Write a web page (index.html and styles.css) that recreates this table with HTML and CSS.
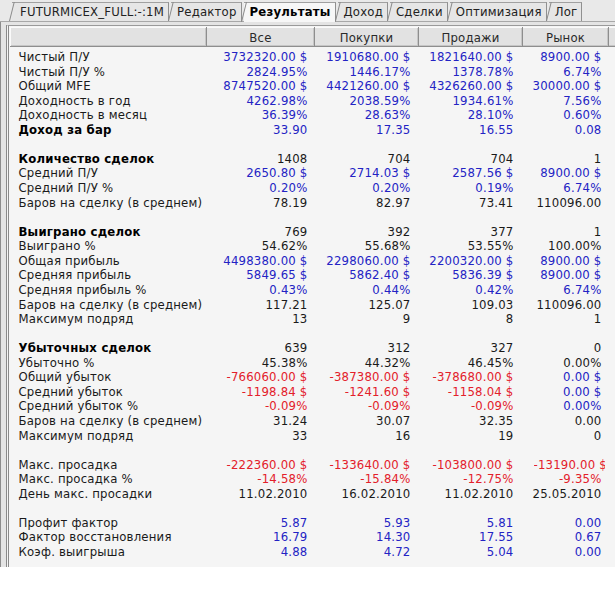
FILE: index.html
```html
<!DOCTYPE html>
<html lang="ru">
<head>
<meta charset="utf-8">
<link rel="stylesheet" href="styles.css">
</head>
<body>
<div class="app">
  <div class="tabs">
    <div class="tab">FUTURMICEX_FULL:-:1M</div>
    <div class="tab">Редактор</div>
    <div class="tab active">Результаты</div>
    <div class="tab">Доход</div>
    <div class="tab">Сделки</div>
    <div class="tab">Оптимизация</div>
    <div class="tab">Лог</div>
  </div>
  <div class="frame">
    <div class="panel">
      <table class="grid">
        <colgroup>
          <col class="c-label"><col class="c1"><col class="c2"><col class="c3"><col class="c4"><col class="c5">
        </colgroup>
        <thead>
          <tr><th></th><th>Все</th><th>Покупки</th><th>Продажи</th><th>Рынок</th><th></th></tr>
        </thead>
        <tbody>
          <tr class="first"><td>Чистый П/У</td><td class="b">3732320.00 $</td><td class="b">1910680.00 $</td><td class="b">1821640.00 $</td><td class="b">8900.00 $</td><td></td></tr>
          <tr><td>Чистый П/У %</td><td class="b">2824.95%</td><td class="b">1446.17%</td><td class="b">1378.78%</td><td class="b">6.74%</td><td></td></tr>
          <tr><td>Общий MFE</td><td class="b">8747520.00 $</td><td class="b">4421260.00 $</td><td class="b">4326260.00 $</td><td class="b">30000.00 $</td><td></td></tr>
          <tr><td>Доходность в год</td><td class="b">4262.98%</td><td class="b">2038.59%</td><td class="b">1934.61%</td><td class="b">7.56%</td><td></td></tr>
          <tr><td>Доходность в месяц</td><td class="b">36.39%</td><td class="b">28.63%</td><td class="b">28.10%</td><td class="b">0.60%</td><td></td></tr>
          <tr><td class="bold">Доход за бар</td><td class="b">33.90</td><td class="b">17.35</td><td class="b">16.55</td><td class="b">0.08</td><td></td></tr>
          <tr class="gap"><td colspan="6"></td></tr>
          <tr><td class="bold">Количество сделок</td><td>1408</td><td>704</td><td>704</td><td>1</td><td></td></tr>
          <tr><td>Средний П/У</td><td class="b">2650.80 $</td><td class="b">2714.03 $</td><td class="b">2587.56 $</td><td class="b">8900.00 $</td><td></td></tr>
          <tr><td>Средний П/У %</td><td class="b">0.20%</td><td class="b">0.20%</td><td class="b">0.19%</td><td class="b">6.74%</td><td></td></tr>
          <tr><td>Баров на сделку (в среднем)</td><td>78.19</td><td>82.97</td><td>73.41</td><td>110096.00</td><td></td></tr>
          <tr class="gap"><td colspan="6"></td></tr>
          <tr><td class="bold">Выиграно сделок</td><td>769</td><td>392</td><td>377</td><td>1</td><td></td></tr>
          <tr><td>Выиграно %</td><td>54.62%</td><td>55.68%</td><td>53.55%</td><td>100.00%</td><td></td></tr>
          <tr><td>Общая прибыль</td><td class="b">4498380.00 $</td><td class="b">2298060.00 $</td><td class="b">2200320.00 $</td><td class="b">8900.00 $</td><td></td></tr>
          <tr><td>Средняя прибыль</td><td class="b">5849.65 $</td><td class="b">5862.40 $</td><td class="b">5836.39 $</td><td class="b">8900.00 $</td><td></td></tr>
          <tr><td>Средняя прибыль %</td><td class="b">0.43%</td><td class="b">0.44%</td><td class="b">0.42%</td><td class="b">6.74%</td><td></td></tr>
          <tr><td>Баров на сделку (в среднем)</td><td>117.21</td><td>125.07</td><td>109.03</td><td>110096.00</td><td></td></tr>
          <tr><td>Максимум подряд</td><td>13</td><td>9</td><td>8</td><td>1</td><td></td></tr>
          <tr class="gap"><td colspan="6"></td></tr>
          <tr><td class="bold">Убыточных сделок</td><td>639</td><td>312</td><td>327</td><td>0</td><td></td></tr>
          <tr><td>Убыточно %</td><td>45.38%</td><td>44.32%</td><td>46.45%</td><td>0.00%</td><td></td></tr>
          <tr><td>Общий убыток</td><td class="r">-766060.00 $</td><td class="r">-387380.00 $</td><td class="r">-378680.00 $</td><td class="b">0.00 $</td><td></td></tr>
          <tr><td>Средний убыток</td><td class="r">-1198.84 $</td><td class="r">-1241.60 $</td><td class="r">-1158.04 $</td><td class="b">0.00 $</td><td></td></tr>
          <tr><td>Средний убыток %</td><td class="r">-0.09%</td><td class="r">-0.09%</td><td class="r">-0.09%</td><td class="b">0.00%</td><td></td></tr>
          <tr><td>Баров на сделку (в среднем)</td><td>31.24</td><td>30.07</td><td>32.35</td><td>0.00</td><td></td></tr>
          <tr><td>Максимум подряд</td><td>33</td><td>16</td><td>19</td><td>0</td><td></td></tr>
          <tr class="gap"><td colspan="6"></td></tr>
          <tr><td>Макс. просадка</td><td class="r">-222360.00 $</td><td class="r">-133640.00 $</td><td class="r">-103800.00 $</td><td class="r clip"><span class="cut">-13190.00 $</span></td><td></td></tr>
          <tr><td>Макс. просадка %</td><td class="r">-14.58%</td><td class="r">-15.84%</td><td class="r">-12.75%</td><td class="r">-9.35%</td><td></td></tr>
          <tr><td>День макс. просадки</td><td>11.02.2010</td><td>16.02.2010</td><td>11.02.2010</td><td>25.05.2010</td><td></td></tr>
          <tr class="gap"><td colspan="6"></td></tr>
          <tr><td>Профит фактор</td><td class="b">5.87</td><td class="b">5.93</td><td class="b">5.81</td><td class="b">0.00</td><td></td></tr>
          <tr><td>Фактор восстановления</td><td class="b">16.79</td><td class="b">14.30</td><td class="b">17.55</td><td class="b">0.67</td><td></td></tr>
          <tr><td>Коэф. выигрыша</td><td class="b">4.88</td><td class="b">4.72</td><td class="b">5.04</td><td class="b">0.00</td><td></td></tr>
        </tbody>
      </table>
    </div>
  </div>
</div>
</body>
</html>
```

FILE: styles.css
```css
html, body {
  margin: 0;
  padding: 0;
  background: #ffffff;
}

body {
  font-family: "DejaVu Sans Condensed", "DejaVu Sans", sans-serif;
  font-size: 13px;
  letter-spacing: 0.2px;
  color: #1a1a1a;
  width: 615px;
  overflow: hidden;
}

.app {
  background: #e9e9e9;
  height: 567px;
  width: 640px;
  display: flex;
  flex-direction: column;
}

/* ---------- tabs ---------- */
.tabs {
  display: flex;
  height: 21px;
  padding-left: 12px;
  align-items: flex-end;
  border-bottom: 1px solid #a8a8a8;
  position: relative;
  z-index: 1;
}

.tab {
  position: relative;
  height: 18px;
  line-height: 18px;
  padding: 0 4px 0 6px;
  margin-left: 2px;
  color: #222;
  border-top: 1px solid #a0a0a0;
  border-right: 1px solid #909090;
  background: #e6e6e6;
}

.tab:first-child { margin-left: 0; padding-left: 8px; }

.tab::before {
  content: "";
  position: absolute;
  left: -3px;
  bottom: 0;
  top: -1px;
  width: 5px;
  border-left: 1px solid #8a8a8a;
  transform: skewX(-14deg);
  transform-origin: bottom left;
}

.tab.active {
  font-weight: bold;
  background: #f7f7f7;
  height: 19px;
  margin-bottom: -1px;
  color: #000;
}

/* ---------- frame ---------- */
.frame {
  flex: 1;
  display: flex;
  padding: 3px 0 0 1px;
  border-left: 1px solid #8c8c8c;
  background: #e4e4e4;
}

.panel {
  flex: 1;
  margin-left: 4px;
  border-left: 3px double #8a8a8a;
  border-top: 1px solid #9a9a9a;
  padding: 1px 0 0 1px;
  background: #f5f5f5;
  min-width: 0;
}

/* ---------- table ---------- */
.grid {
  border-collapse: collapse;
  table-layout: fixed;
  width: 640px;
}

.c-label { width: 196px; }
.c1 { width: 108px; }
.c2 { width: 104px; }
.c3 { width: 104px; }
.c4 { width: 86px; }
.c5 { width: 42px; }

.grid th {
  height: 18px;
  padding: 0;
  font-weight: normal;
  text-align: center;
  color: #2a2a2a;
  background: #e2e2e2;
  border-top: 1px solid #fafafa;
  border-left: 1px solid #fafafa;
  border-right: 1px solid #8e8e8e;
  border-bottom: 1px solid #8e8e8e;
  box-shadow: inset -1px -1px 0 #c6c6c6;
}

.grid td {
  padding: 0 7px 0 0;
  height: 14.56px;
  line-height: 14.56px;
  text-align: right;
  white-space: nowrap;
  overflow: hidden;
}

.grid td:first-child {
  text-align: left;
  padding: 0 0 0 8px;
}

.grid td:nth-child(3) { padding-right: 8px; }
.grid td:nth-child(4) { padding-right: 9px; }
.grid td:nth-child(5) { padding-right: 7px; }

.grid tr.first td { padding-top: 3px; }

.grid tr.gap td { height: 14.56px; }

.bold { font-weight: bold; color: #000; }
.b { color: #2323c4; }
.r { color: #e3202a; }

.grid td.clip {
  text-align: left;
  padding-left: 11px;
  padding-right: 0;
}

.cut {
  display: block;
  width: 71px;
  overflow: hidden;
  white-space: nowrap;
}
```
